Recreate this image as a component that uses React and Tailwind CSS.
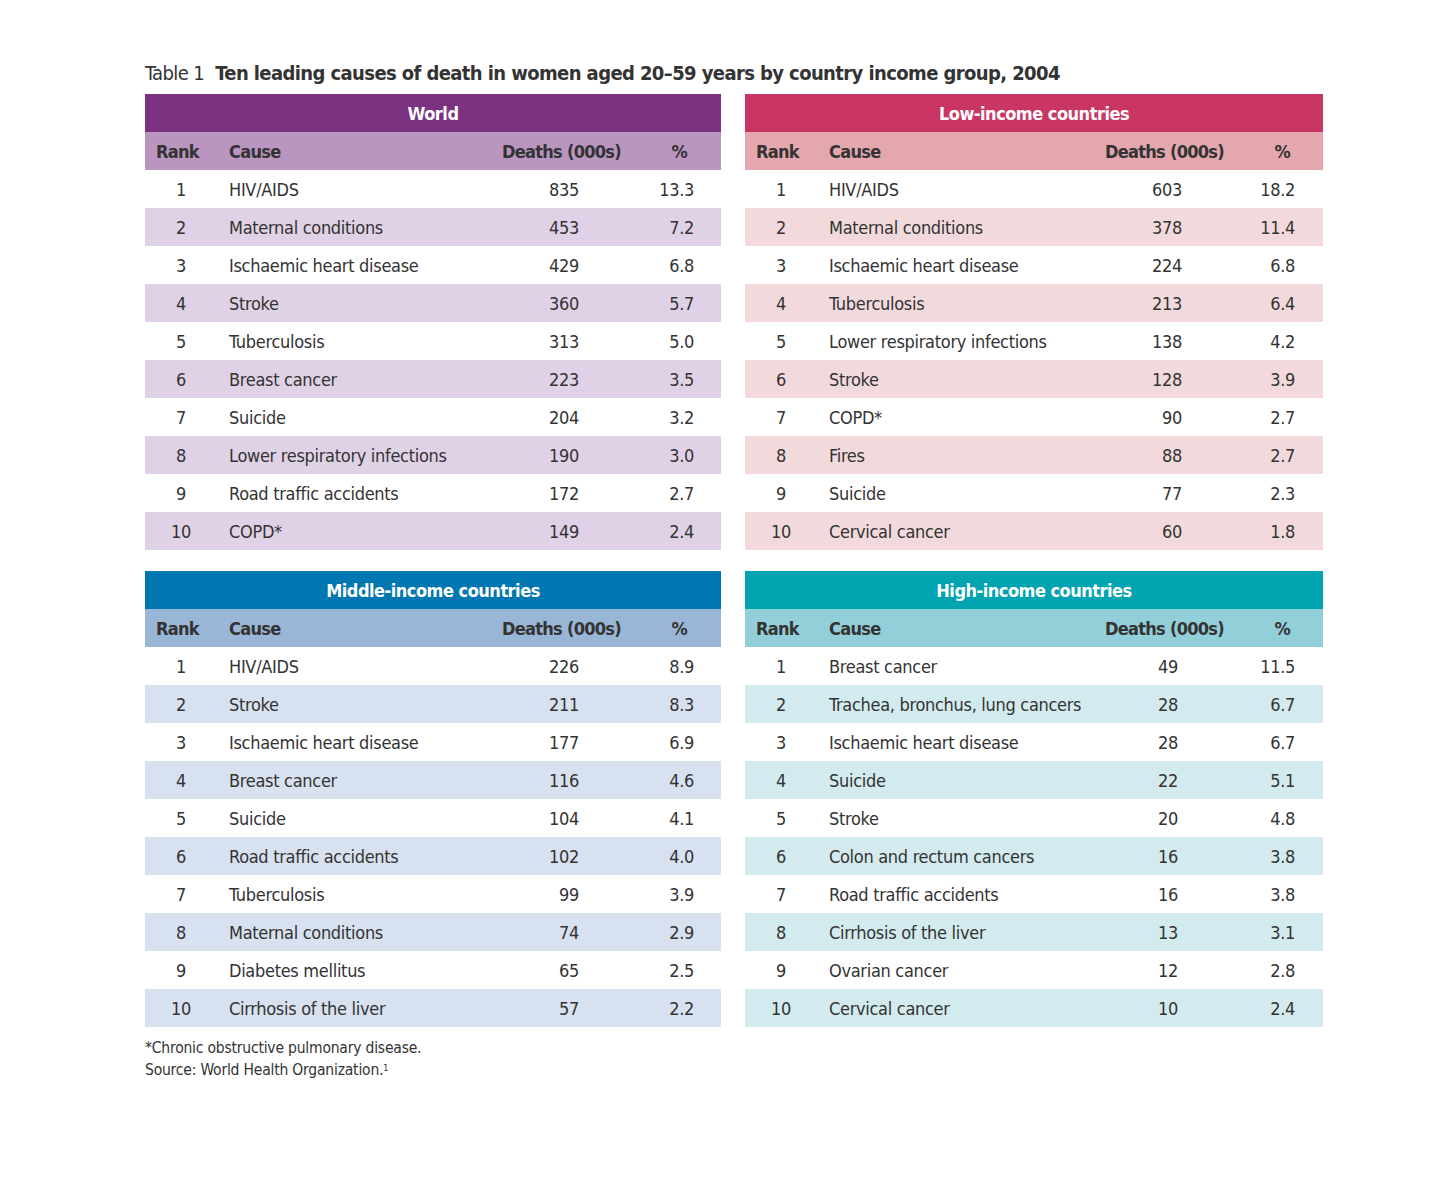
const font = { fontFamily: "'Liberation Sans Narrow', 'Arial Narrow', 'DejaVu Sans Condensed', 'Liberation Sans', sans-serif" };

const tables = [
  {
    title: 'World',
    head: 'bg-[#7b3280]',
    cols: 'bg-[#b995c0]',
    stripe: 'bg-[#e0d2e6]',
    headGrid: 'grid-cols-[72px_220px_184px_80px]',
    rowGrid: 'grid-cols-[72px_220px_142px_115px]',
    dpad: '',
    rows: [
      ['HIV/AIDS', '835', '13.3'],
      ['Maternal conditions', '453', '7.2'],
      ['Ischaemic heart disease', '429', '6.8'],
      ['Stroke', '360', '5.7'],
      ['Tuberculosis', '313', '5.0'],
      ['Breast cancer', '223', '3.5'],
      ['Suicide', '204', '3.2'],
      ['Lower respiratory infections', '190', '3.0'],
      ['Road traffic accidents', '172', '2.7'],
      ['COPD*', '149', '2.4'],
    ],
  },
  {
    title: 'Low-income countries',
    head: 'bg-[#c93664]',
    cols: 'bg-[#e5a7ae]',
    stripe: 'bg-[#f2dadc]',
    headGrid: 'grid-cols-[72px_220px_187px_80px]',
    rowGrid: 'grid-cols-[72px_220px_145px_113px]',
    dpad: '',
    rows: [
      ['HIV/AIDS', '603', '18.2'],
      ['Maternal conditions', '378', '11.4'],
      ['Ischaemic heart disease', '224', '6.8'],
      ['Tuberculosis', '213', '6.4'],
      ['Lower respiratory infections', '138', '4.2'],
      ['Stroke', '128', '3.9'],
      ['COPD*', '90', '2.7'],
      ['Fires', '88', '2.7'],
      ['Suicide', '77', '2.3'],
      ['Cervical cancer', '60', '1.8'],
    ],
  },
  {
    title: 'Middle-income countries',
    head: 'bg-[#0077b0]',
    cols: 'bg-[#99b6d6]',
    stripe: 'bg-[#d8e1ef]',
    headGrid: 'grid-cols-[72px_220px_184px_80px]',
    rowGrid: 'grid-cols-[72px_220px_142px_115px]',
    dpad: '',
    rows: [
      ['HIV/AIDS', '226', '8.9'],
      ['Stroke', '211', '8.3'],
      ['Ischaemic heart disease', '177', '6.9'],
      ['Breast cancer', '116', '4.6'],
      ['Suicide', '104', '4.1'],
      ['Road traffic accidents', '102', '4.0'],
      ['Tuberculosis', '99', '3.9'],
      ['Maternal conditions', '74', '2.9'],
      ['Diabetes mellitus', '65', '2.5'],
      ['Cirrhosis of the liver', '57', '2.2'],
    ],
  },
  {
    title: 'High-income countries',
    head: 'bg-[#00a3b0]',
    cols: 'bg-[#93cfd9]',
    stripe: 'bg-[#d3ebef]',
    headGrid: 'grid-cols-[72px_220px_187px_80px]',
    rowGrid: 'grid-cols-[72px_220px_145px_113px]',
    dpad: 'pr-[4px]',
    rows: [
      ['Breast cancer', '49', '11.5'],
      ['Trachea, bronchus, lung cancers', '28', '6.7'],
      ['Ischaemic heart disease', '28', '6.7'],
      ['Suicide', '22', '5.1'],
      ['Stroke', '20', '4.8'],
      ['Colon and rectum cancers', '16', '3.8'],
      ['Road traffic accidents', '16', '3.8'],
      ['Cirrhosis of the liver', '13', '3.1'],
      ['Ovarian cancer', '12', '2.8'],
      ['Cervical cancer', '10', '2.4'],
    ],
  },
];

const IncomeTable = ({ t }) => (
  <div className="flex flex-col">
    <div className={`${t.head} h-[38px] flex items-center justify-center text-white font-bold text-[18px] tracking-[-0.5px]`}>
      {t.title}
    </div>
    <div className={`${t.cols} h-[38px] grid ${t.headGrid} items-center font-bold text-[18px] tracking-[-0.7px] text-[#333]`}>
      <span className="pl-[11px]">Rank</span>
      <span className="pl-[12px]">Cause</span>
      <span className="text-right">Deaths (000s)</span>
      <span className="text-right pr-[14px]">%</span>
    </div>
    {t.rows.map((r, i) => (
      <div
        key={i}
        className={`${i % 2 ? t.stripe : 'bg-white'} h-[38px] grid ${t.rowGrid} items-center text-[18px] tracking-[-0.3px] text-[#333]`}
      >
        <span className="text-center">{i + 1}</span>
        <span className="pl-[12px] whitespace-nowrap">{r[0]}</span>
        <span className={`text-right ${t.dpad}`}>{r[1]}</span>
        <span className="text-right">{r[2]}</span>
      </div>
    ))}
  </div>
);

export default function App() {
  return (
    <div className="w-[1454px] h-[1202px] bg-white pt-[58px] pl-[145px]" style={font}>
      <h1 className="text-[20px] text-[#333] leading-[30px] mb-[6px] tracking-[-0.6px]">
        Table 1 <span className="font-bold ml-[6px]">Ten leading causes of death in women aged 20–59 years by country income group, 2004</span>
      </h1>
      <div className="grid grid-cols-[576px_578px] gap-x-[24px] gap-y-[21px] w-[1178px]">
        {tables.map((t) => (
          <IncomeTable key={t.title} t={t} />
        ))}
      </div>
      <div className="mt-[10px] text-[15.5px] text-[#333] leading-[22px] tracking-[-0.2px]">
        <p>*Chronic obstructive pulmonary disease.</p>
        <p>Source: World Health Organization.<sup className="text-[9px]">1</sup></p>
      </div>
    </div>
  );
}
